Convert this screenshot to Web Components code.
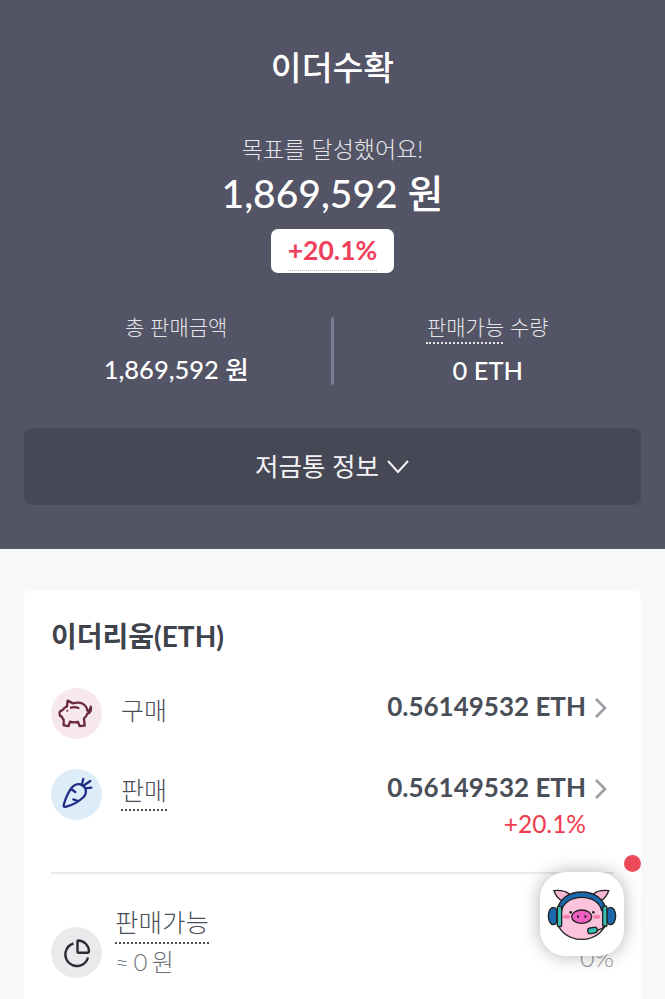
<!DOCTYPE html>
<html lang="ko">
<head>
<meta charset="utf-8">
<title>이더수확</title>
<style>
	html, body { margin: 0; padding: 0; height: 999px; overflow: hidden; background: #f6f8fa; }
	body { font-family: Lato, "Noto Sans CJK KR", sans-serif; }
</style>
</head>
<body>
<harvest-hero></harvest-hero>
<coin-card></coin-card>
<help-fab></help-fab>

<script>
const FONT = 'Lato, "Noto Sans CJK KR", sans-serif';

class HarvestHero extends HTMLElement {
	constructor() {
		super();
		this.attachShadow({ mode: 'open' });
		this.shadowRoot.innerHTML = `
			<style>
				:host { display: block; height: 549px; box-sizing: border-box; padding: 44px 24px 0; background: #535465; color: #fff; font-family: ${FONT}; text-align: center; }
				h1 { margin: 0; font-size: 33.5px; line-height: 46px; font-weight: 500; }
				.goal { margin-top: 43px; font-size: 23px; line-height: 32px; font-weight: 300; color: #e6e6ea; }
				.total { margin-top: 4px; font-size: 39px; line-height: 48px; font-weight: 500; }
				.badge { display: inline-flex; justify-content: center; align-items: center; box-sizing: border-box; width: 123px; height: 44px; margin-top: 12px; padding-bottom: 2px; border-radius: 7px; background: #fff; color: #f0405c; font-size: 26.5px; font-weight: 700; position: relative; }
				.badge::after { content: ''; position: absolute; left: 17px; right: 17px; bottom: 2px; border-bottom: 1px dotted #bbb; }
				.stats { display: grid; grid-template-columns: 1fr 3px 1fr; margin: 44px -24px 0; padding: 0 23px 0 22px; height: 67px; }
				.line { background: #7b7c8f; border-radius: 2px; }
				.stat { display: flex; flex-direction: column; align-items: center; margin-top: -5px; }
				.label { font-size: 21px; line-height: 30px; font-weight: 300; color: #e6e6ea; }
				.dotted { position: relative; }
				.dotted::after { content: ''; position: absolute; left: -1px; width: 77px; top: 30px; border-bottom: 2px dotted #e6e6ea; }
				.value { font-size: 25.5px; line-height: 30px; font-weight: 500; }
				.toggle { display: flex; justify-content: center; align-items: center; gap: 7px; box-sizing: border-box; height: 77px; padding-bottom: 5px; margin-top: 44px; border-radius: 8px; background: #474856; font-size: 25.500px; font-weight: 400; color: #f4f4f6; }
				svg { display: block; margin-top: 5px; }
			</style>
			<h1>이더수확</h1>
			<div class="goal">목표를 달성했어요!</div>
			<div class="total">1,869,592 원</div>
			<div><span class="badge">+20.1%</span></div>
			<div class="stats">
				<div class="stat"><span class="label">총 판매금액</span><span class="value" style="margin-top:12px">1,869,592 원</span></div>
				<div class="line"></div>
				<div class="stat"><span class="label dotted">판매가능 수량</span><span class="value" style="margin-top:13px">0 ETH</span></div>
			</div>
			<div class="toggle">저금통 정보
				<svg width="24" height="16" viewBox="0 0 24 16" fill="none" stroke="#f4f4f6" stroke-width="2"><path d="M2 2l10 11L22 2"/></svg>
			</div>
		`;
	}
}

class CoinRow extends HTMLElement {
	constructor() {
		super();
		this.attachShadow({ mode: 'open' });
		this.shadowRoot.innerHTML = `
			<style>
				:host { display: flex; align-items: flex-start; color: #4a4e57; font-family: ${FONT}; }
				.icon { width: 51px; height: 51px; border-radius: 50%; flex: none; display: flex; align-items: center; justify-content: center; background: var(--tint); }
				.name { margin-left: 19px; font-size: 25px; line-height: 36px; margin-top: 4px; font-weight: 300; color: #4a4e57; }
				:host([dotted]) .name { padding-bottom: 2px; border-bottom: 2px dotted #4a4e57; line-height: 34px; }
				.right { margin-left: auto; margin-right: 7px; text-align: right; }
				.amount { display: flex; align-items: center; gap: 8px; font-size: 26px; line-height: 36px; font-weight: 700; }
				.sub { margin-top: 1px; padding-right: 21px; font-size: 24.500px; line-height: 36px; color: #ef3b4c; font-weight: 400; }
				svg.chev { display: block; margin-top: 3px; }
			</style>
			<div class="icon"><slot name="icon"></slot></div>
			<div class="name"><slot name="name"></slot></div>
			<div class="right">
				<div class="amount"><slot name="amount"></slot>
					<svg class="chev" width="13" height="22" viewBox="0 0 13 22" fill="none" stroke="#9a9da2" stroke-width="2.6"><path d="M2 2l9 9-9 9"/></svg>
				</div>
				<div class="sub"><slot name="sub"></slot></div>
			</div>
		`;
	}
}

class CoinCard extends HTMLElement {
	constructor() {
		super();
		this.attachShadow({ mode: 'open' });
		this.shadowRoot.innerHTML = `
			<style>
				:host { display: block; margin: 41px 24px 0; padding: 27px 27px 40px; background: #fff; border-radius: 8px; font-family: ${FONT}; color: #3f434b; }
				h2 { margin: 0; font-size: 28px; line-height: 38px; font-weight: 700; }
				coin-row { margin-top: 33px; }
				coin-row + coin-row { margin-top: 30px; height: 87px; }
				hr { margin: 16px 0 0; border: 0; height: 2px; background: #e9eaed; }
				.avail { display: flex; align-items: flex-end; margin-top: 30px; position: relative; }
				.pie { width: 51px; height: 51px; border-radius: 50%; background: #e9eaec; display: flex; align-items: center; justify-content: center; flex: none; margin-bottom: 2px; }
				.text { margin-left: 13px; }
				.name { font-size: 25.500px; line-height: 36px; font-weight: 300; color: #4a4e57; border-bottom: 2px dotted #4a4e57; padding-bottom: 2px; }
				.won { font-size: 24px; line-height: 36px; font-weight: 300; color: #6f7379; word-spacing: -2px; }
				.pct { margin-left: auto; font-size: 25px; line-height: 30px; color: #8f9297; font-weight: 300; margin-bottom: 8px; }
			</style>
			<h2>이더리움(ETH)</h2>
			<coin-row style="--tint:#f6e8ee">
				<svg slot="icon" width="51" height="51" viewBox="0 0 153 153" fill="none" stroke="#6b2a42" stroke-width="7" stroke-linejoin="round" stroke-linecap="round">
					<path d="M50 38L66 46C80 42 96 44 104 55C107 59 109 63 109 68C114 69 119 64 119 56C122 65 119 74 109 77C107 83 104 88 99 91L101 113L86 114L81 102C72 104 64 104 57 101L53 114L38 112L38 95C35 92 33 89 32 85L27 84C25 79 25 74 27 70L35 66C38 61 43 57 48 55Z"/>
					<path d="M60 59c7-2 15-2 22 1"/>
					<circle cx="49" cy="68" r="3" fill="#6b2a42" stroke="none"/>
				</svg>
				<span slot="name">구매</span>
				<span slot="amount">0.56149532 ETH</span>
			</coin-row>
			<coin-row dotted style="--tint:#dcecf9">
				<svg slot="icon" width="51" height="51" viewBox="0 0 153 153" fill="none" stroke="#1f2f85" stroke-width="7" stroke-linejoin="round" stroke-linecap="round">
					<path d="M38 108c5-18 14-40 26-54 9-10 24-12 34-3 9 9 9 23 0 33-14 13-36 25-52 29-6 2-9 0-8-5z"/>
					<path d="M96 51l22-15M92 48l5-18M103 58l18-2M60 60l13 9M67 91l14 5"/>
				</svg>
				<span slot="name">판매</span>
				<span slot="amount">0.56149532 ETH</span>
				<span slot="sub">+20.1%</span>
			</coin-row>
			<hr>
			<div class="avail">
				<div class="pie">
					<svg width="30" height="30" viewBox="0 0 30 30" fill="none" stroke="#2b2d31" stroke-width="2.400" stroke-linejoin="round">
						<path d="M11.500 5.500A11.500 11.500 0 1 0 26 19.500"/>
						<path d="M16 2.500c6 0 11 5 11 11 0 .8-.4 1.200-1.200 1.200H16.500c-.6 0-1-.4-1-1V3c0-.3.200-.5.500-.5z"/>
					</svg>
				</div>
				<div class="text">
					<div class="name">판매가능</div>
					<div class="won">≈ 0 원</div>
				</div>
				<div class="pct">0%</div>
			</div>
		`;
	}
}

class HelpFab extends HTMLElement {
	constructor() {
		super();
		this.attachShadow({ mode: 'open' });
		this.shadowRoot.innerHTML = `
			<style>
				:host { position: fixed; left: 540px; top: 872px; width: 84px; height: 84px; border-radius: 26px; background: #fff; box-shadow: 0 0 18px rgba(0,0,0,.3); display: flex; align-items: center; justify-content: center; }
				.dot { position: absolute; left: 84px; top: -17px; width: 17px; height: 17px; border-radius: 50%; background: #ec4a58; }
				svg { display: block; margin-top: 2px; }
			</style>
			<div class="dot"></div>
			<svg width="84" height="70" viewBox="0 0 252 210" stroke="#222" stroke-width="4">
				<path d="M42 32c18-2 36 2 46 10L66 62C54 56 46 44 42 32zM206 32c-18-2-36 2-46 10l22 20c12-6 20-18 24-30z" fill="#f6b7d2"/>
				<ellipse cx="40" cy="108" rx="15" ry="26" fill="#1b68ae"/>
				<ellipse cx="212" cy="108" rx="15" ry="26" fill="#1b68ae"/>
				<ellipse cx="125" cy="112" rx="76" ry="66" fill="#fbc3dc"/>
				<path d="M52 92C56 58 86 36 125 36s69 22 73 56l-13 0C180 68 156 52 125 52S70 68 65 92z" fill="#1b68ae"/>
				<rect x="52" y="78" width="13" height="62" rx="6" fill="#36bdb6"/>
				<rect x="188" y="78" width="13" height="62" rx="6" fill="#36bdb6"/>
				<ellipse cx="125" cy="110" rx="30" ry="20" fill="#ee5fc0"/>
				<ellipse cx="114" cy="110" rx="3" ry="4" fill="#222" stroke="none"/>
				<ellipse cx="136" cy="110" rx="3" ry="4" fill="#222" stroke="none"/>
				<circle cx="92" cy="97" r="4" fill="#222" stroke="none"/>
				<circle cx="160" cy="97" r="4" fill="#222" stroke="none"/>
				<ellipse cx="80" cy="110" rx="11" ry="6" fill="#f57fa8" stroke="none"/>
				<ellipse cx="170" cy="110" rx="11" ry="6" fill="#f57fa8" stroke="none"/>
				<path d="M195 135c-3 8-12 13-24 15" fill="none"/>
				<rect x="143" y="143" width="29" height="17" rx="8.500" fill="#36bdb6" transform="rotate(-10 157 151)"/>
			</svg>
		`;
	}
}

customElements.define('harvest-hero', HarvestHero);
customElements.define('coin-row', CoinRow);
customElements.define('coin-card', CoinCard);
customElements.define('help-fab', HelpFab);
</script>
</body>
</html>
